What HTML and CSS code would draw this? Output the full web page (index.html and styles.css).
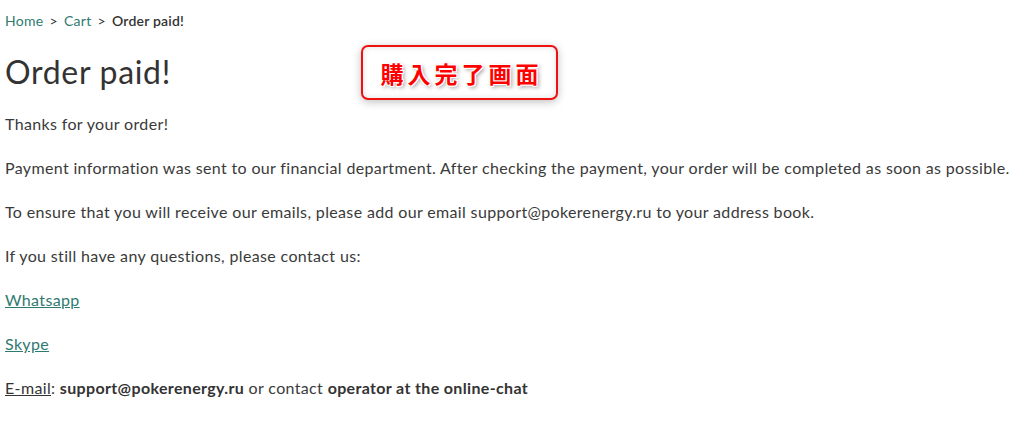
FILE: index.html
```html
<!DOCTYPE html>
<html lang="en">
<head>
<meta charset="utf-8">
<title>Order paid!</title>
<link rel="stylesheet" href="styles.css">
</head>
<body>
<main class="page">
  <nav class="crumbs">
    <a href="#">Home</a><span class="sep">&gt;</span><a href="#">Cart</a><span class="sep">&gt;</span><span class="current">Order paid!</span>
  </nav>
  <div class="title-row">
    <h1>Order paid!</h1>
    <div class="note">購入完了画面</div>
  </div>
  <p>Thanks for your order!</p>
  <p>Payment information was sent to our financial department. After checking the payment, your order will be completed as soon as possible.</p>
  <p>To ensure that you will receive our emails, please add our email support@pokerenergy.ru to your address book.</p>
  <p>If you still have any questions, please contact us:</p>
  <p><a href="#" class="link">Whatsapp</a></p>
  <p><a href="#" class="link">Skype</a></p>
  <p><a href="#" class="mail">E-mail</a>: <b>support@pokerenergy.ru</b> or contact <b>operator at the online-chat</b></p>
</main>
</body>
</html>
```
FILE: styles.css
```css
html, body {
  margin: 0;
  padding: 0;
  background: #fff;
}
body {
  font-family: Lato, "Liberation Sans", sans-serif;
  color: #3a3a3a;
  font-size: 16px;
}
.page {
  padding: 11px 0 0 5px;
}
.crumbs {
  font-size: 14px;
  line-height: 20px;
  display: flex;
  align-items: center;
  letter-spacing: 0.3px;
}
.crumbs a {
  color: #2f7a70;
  text-decoration: none;
}
.crumbs .sep {
  margin: 0 6px;
  color: #333;
}
.crumbs .current {
  color: #333;
  font-weight: 600;
  letter-spacing: 0.2px;
}
.title-row {
  display: flex;
  align-items: flex-start;
  margin-top: 14px;
  height: 67px;
}
h1 {
  margin: 9px 0 0;
  font-size: 32px;
  font-weight: 400;
  line-height: 36px;
  width: 356px;
  color: #333;
  letter-spacing: 0.7px;
}
.note {
  width: 193px;
  height: 51px;
  border: 2px solid #f01010;
  border-radius: 7px;
  box-shadow: 0 2px 8px rgba(0,0,0,0.25), inset 0 0 6px rgba(0,0,0,0.12);
  background: #fff;
  display: flex;
  align-items: center;
  justify-content: center;
  padding-left: 4px;
  box-sizing: content-box;
  width: 189px;
  color: #f00;
  font-family: "Noto Sans CJK JP", sans-serif;
  font-weight: 700;
  font-size: 23px;
  letter-spacing: 4px;
  text-shadow: 1px 1px 0 #fff, -1px -1px 0 #fff, 1px -1px 0 #fff, -1px 1px 0 #fff, 2px 2px 4px rgba(0,0,0,0.45);
}
p {
  margin: 0 0 20px;
  line-height: 24px;
  letter-spacing: 0.35px;
}
.link {
  color: #2f7a70;
  text-decoration: underline;
}
.mail {
  color: #333;
  text-decoration: underline;
}
b {
  font-weight: 700;
  color: #333;
}
```
